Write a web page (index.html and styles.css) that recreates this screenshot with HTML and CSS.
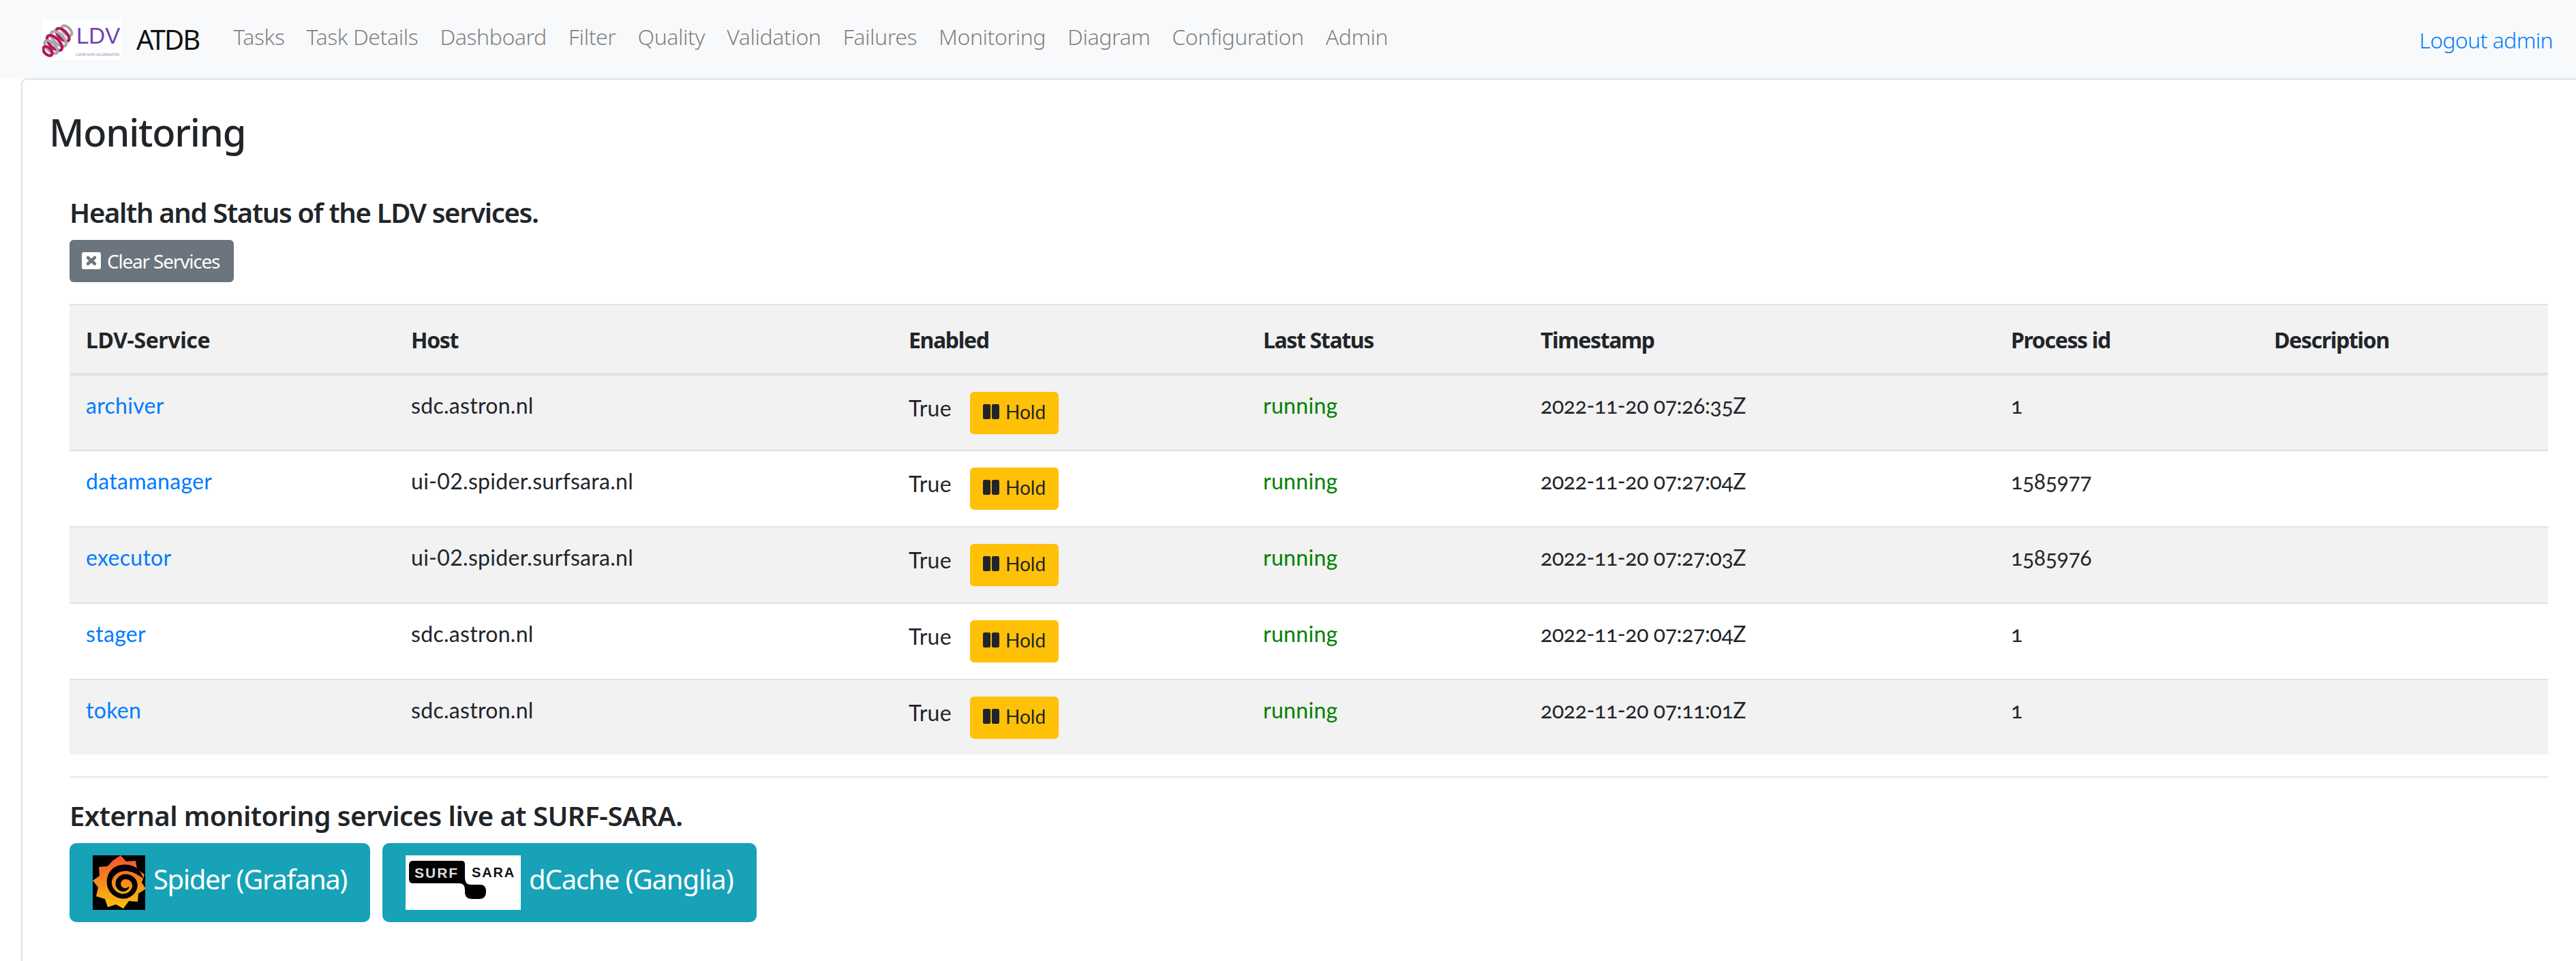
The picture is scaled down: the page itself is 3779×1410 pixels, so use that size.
FILE: index.html
```html
<!DOCTYPE html>
<html lang="en">
<head>
<meta charset="utf-8">
<title>ATDB Monitoring</title>
<link rel="stylesheet" href="styles.css">
</head>
<body>
<nav class="navbar">
  <a class="brand" href="#">
    <svg class="logo" viewBox="0 0 116 60" aria-hidden="true">
      <rect width="116" height="60" fill="#fff"/>
      <g fill="none" stroke-width="4.2">
        <ellipse cx="36" cy="17" rx="9" ry="5" transform="rotate(45 36 17)" stroke="#a8a8aa"/>
        <ellipse cx="30" cy="23" rx="12" ry="6" transform="rotate(45 30 23)" stroke="#b5195d"/>
        <ellipse cx="24" cy="29" rx="14" ry="7" transform="rotate(45 24 29)" stroke="#a8a8aa"/>
        <ellipse cx="18" cy="35" rx="14" ry="7" transform="rotate(45 18 35)" stroke="#b5195d"/>
        <ellipse cx="13" cy="41" rx="12" ry="6" transform="rotate(45 13 41)" stroke="#a8a8aa"/>
        <ellipse cx="8" cy="47" rx="8" ry="5" transform="rotate(45 8 47)" stroke="#b5195d"/>
      </g>
      <text x="50" y="36" class="logo-big">LDV</text>
      <text x="49" y="54" class="logo-small" textLength="64" lengthAdjust="spacingAndGlyphs">LOFAR DATA VALORISATION</text>
    </svg>
    <span>ATDB</span>
  </a>
  <ul class="nav-links">
    <li><a href="#">Tasks</a></li>
    <li><a href="#">Task Details</a></li>
    <li><a href="#">Dashboard</a></li>
    <li><a href="#">Filter</a></li>
    <li><a href="#">Quality</a></li>
    <li><a href="#">Validation</a></li>
    <li><a href="#">Failures</a></li>
    <li><a href="#">Monitoring</a></li>
    <li><a href="#">Diagram</a></li>
    <li><a href="#">Configuration</a></li>
    <li><a href="#">Admin</a></li>
  </ul>
  <a class="logout" href="#">Logout admin</a>
</nav>
<main class="panel">
  <h1 class="page-title">Monitoring</h1>
  <section class="content">
    <h2 class="section-title">Health and Status of the LDV services.</h2>
    <a class="btn-clear" href="#">
      <svg class="icon-close" viewBox="0 0 28 26" aria-hidden="true">
        <rect width="28" height="25" rx="3" fill="#fff"/>
        <path d="M9 8l10 9M19 8l-10 9" stroke="#6c757d" stroke-width="4.5" stroke-linecap="round"/>
      </svg>
      Clear Services
    </a>
    <table class="services">
      <colgroup>
        <col class="c1"><col class="c2"><col class="c3"><col class="c4"><col class="c5"><col class="c6"><col class="c7">
      </colgroup>
      <thead>
        <tr><th>LDV-Service</th><th>Host</th><th>Enabled</th><th>Last Status</th><th>Timestamp</th><th>Process id</th><th>Description</th></tr>
      </thead>
      <tbody>
        <tr><td><a href="#">archiver</a></td><td>sdc.astron.nl</td><td><div class="enabled"><span class="true">True</span><a class="btn-hold" href="#"><svg class="icon-pause" viewBox="0 0 26 24" aria-hidden="true"><rect width="12" height="24" rx="2.5"/><rect x="14" width="12" height="24" rx="2.5"/></svg>Hold</a></div></td><td class="status">running</td><td class="num">2022-11-20 07:26:35Z</td><td class="num">1</td><td></td></tr>
        <tr><td><a href="#">datamanager</a></td><td>ui-02.spider.surfsara.nl</td><td><div class="enabled"><span class="true">True</span><a class="btn-hold" href="#"><svg class="icon-pause" viewBox="0 0 26 24" aria-hidden="true"><rect width="12" height="24" rx="2.5"/><rect x="14" width="12" height="24" rx="2.5"/></svg>Hold</a></div></td><td class="status">running</td><td class="num">2022-11-20 07:27:04Z</td><td class="num">1585977</td><td></td></tr>
        <tr><td><a href="#">executor</a></td><td>ui-02.spider.surfsara.nl</td><td><div class="enabled"><span class="true">True</span><a class="btn-hold" href="#"><svg class="icon-pause" viewBox="0 0 26 24" aria-hidden="true"><rect width="12" height="24" rx="2.5"/><rect x="14" width="12" height="24" rx="2.5"/></svg>Hold</a></div></td><td class="status">running</td><td class="num">2022-11-20 07:27:03Z</td><td class="num">1585976</td><td></td></tr>
        <tr><td><a href="#">stager</a></td><td>sdc.astron.nl</td><td><div class="enabled"><span class="true">True</span><a class="btn-hold" href="#"><svg class="icon-pause" viewBox="0 0 26 24" aria-hidden="true"><rect width="12" height="24" rx="2.5"/><rect x="14" width="12" height="24" rx="2.5"/></svg>Hold</a></div></td><td class="status">running</td><td class="num">2022-11-20 07:27:04Z</td><td class="num">1</td><td></td></tr>
        <tr><td><a href="#">token</a></td><td>sdc.astron.nl</td><td><div class="enabled"><span class="true">True</span><a class="btn-hold" href="#"><svg class="icon-pause" viewBox="0 0 26 24" aria-hidden="true"><rect width="12" height="24" rx="2.5"/><rect x="14" width="12" height="24" rx="2.5"/></svg>Hold</a></div></td><td class="status">running</td><td class="num">2022-11-20 07:11:01Z</td><td class="num">1</td><td></td></tr>
      </tbody>
    </table>
    <hr class="divider">
    <h2 class="section-title external">External monitoring services live at SURF-SARA.</h2>
    <div class="ext-links">
      <a class="btn-ext btn-spider" href="#">
        <svg class="ext-img" width="77" height="80" viewBox="0 0 77 80" aria-hidden="true">
          <defs><linearGradient id="gf" x1="0" y1="0" x2="0" y2="1"><stop offset="0" stop-color="#f2512b"/><stop offset="1" stop-color="#fbc30e"/></linearGradient></defs>
          <rect width="77" height="80" fill="#000"/>
          <path d="M41 0l8 9 14-1 2 12 11 8-4 12 6 9-11 7-1 12-13-1-8 11-11-6-12 4-4-12-13-4 3-13-8-10 10-7-1-13 13-1 7-8z" fill="url(#gf)"/>
          <path d="M74 34C70 17 55 12 42 14C27 16 19 29 21 43C23 56 36 66 50 63C61 60 68 49 65 39C62 30 52 26 44 28C36 31 32 38 34 45C36 51 43 55 49 52C53 50 55 46 52 46C50 49 45 49 42 45C40 41 42 36 47 35C54 34 59 40 58 46C56 54 48 58 41 56C33 54 27 46 28 38C30 28 40 22 50 23C62 24 71 32 74 34Z" fill="#000"/>
        </svg>
        <span class="ext-label">Spider (Grafana)</span>
      </a>
      <a class="btn-ext btn-dcache" href="#">
        <svg class="ext-img" width="169" height="80" viewBox="0 0 169 80" aria-hidden="true">
          <rect width="169" height="80" fill="#fff"/>
          <path d="M11 8H82Q87 8 87 13V33Q87 43 96 43H110Q118 43 118 53Q118 64 108 64H98Q87 64 87 54V50Q87 41 78 41H11Q5 41 5 35V14Q5 8 11 8Z" fill="#000"/>
          <text x="13" y="33" class="surf-text" textLength="62">SURF</text>
          <text x="97" y="32" class="sara-text" textLength="61">SARA</text>
        </svg>
        <span class="ext-label">dCache (Ganglia)</span>
      </a>
    </div>
  </section>
</main>
</body>
</html>
```

FILE: styles.css
```css
* { box-sizing: border-box; }
html, body { margin: 0; padding: 0; }
body {
  width: 3779px;
  height: 1410px;
  overflow: hidden;
  background: #fff;
  color: #212529;
  font-family: "Noto Sans", "Open Sans", sans-serif;
  font-size: 32px;
  line-height: 1.5;
}
a { text-decoration: none; color: #007bff; }

.navbar {
  display: flex;
  align-items: center;
  height: 115px;
  padding: 0 34px 0 62px;
  background: #f8f9fa;
}
.brand {
  display: flex;
  align-items: center;
  gap: 22px;
  color: #111;
  font-size: 40px;
  letter-spacing: -2px;
  margin-right: 50px;
}
.logo { width: 116px; height: 60px; display: block; }
.logo-big { font-family: "Liberation Sans", sans-serif; font-size: 33px; fill: #6f3fb0; letter-spacing: 0; }
.logo-small { font-family: "Liberation Sans", sans-serif; font-size: 5px; fill: #8a88a8; letter-spacing: 0; }
.nav-links {
  display: flex;
  gap: 32px;
  list-style: none;
  margin: 0;
  padding: 0 0 8px;
  flex: 1;
}
.nav-links a { color: rgba(0,0,0,.5); letter-spacing: -.43px; font-weight: 300; }
.logout { letter-spacing: -.6px; font-weight: 300; padding-top: 2px; }

.panel {
  margin-left: 31px;
  height: 1295px;
  border-left: 2px solid #dee2e6;
  border-top: 2px solid #dee2e6;
  border-top-left-radius: 8px;
  padding: 0 0 0 39px;
}
.page-title {
  margin: 43px 0 0;
  font-size: 56px;
  font-weight: 500;
  line-height: 67px;
  letter-spacing: -1.2px;
}
.content { padding: 0 41px 0 30px; }
.section-title {
  margin: 61px 0 0;
  font-size: 40px;
  font-weight: 600;
  line-height: 48px;
  letter-spacing: -1.33px;
}
.btn-clear {
  display: inline-flex;
  align-items: center;
  gap: 9px;
  height: 62px;
  width: 241px;
  margin-top: 16px;
  padding-left: 18px;
  background: #6c757d;
  color: #fff;
  border-radius: 6px;
  font-size: 28px;
  letter-spacing: -1.2px;
  white-space: nowrap;
}
.icon-close { width: 28px; height: 26px; display: block; }

.services {
  margin-top: 32px;
  width: 100%;
  border-collapse: collapse;
  table-layout: fixed;
  font-family: "Lato", sans-serif;
}
.c1 { width: 477px; }
.c2 { width: 730px; }
.c3 { width: 520px; }
.c4 { width: 407px; }
.c5 { width: 690px; }
.c6 { width: 386px; }
.services th {
  height: 102px;
  padding: 2px 24px 0;
  text-align: left;
  font-family: "Noto Sans", sans-serif;
  font-weight: 700;
  font-size: 32px;
  letter-spacing: -1.35px;
  background: #f2f2f2;
  border-top: 2px solid #dee2e6;
  border-bottom: 4px solid #dee2e6;
}
.services th:first-child { letter-spacing: -.4px; }
.services td {
  height: 112px;
  padding: 24px 24px 0;
  vertical-align: top;
  border-bottom: 2px solid #dee2e6;
  font-size: 32px;
  line-height: 40px;
  letter-spacing: .3px;
}
.services td.num {
  letter-spacing: -.4px;
  font-variant-numeric: oldstyle-nums;
}
.services tbody tr:nth-child(odd) td { background: #f2f2f2; }
.services tbody tr:last-child td { border-bottom: 0; height: 110px; }
.services td a { color: #007bff; }
.status { color: #008000; }
.enabled { display: flex; align-items: flex-start; }
.true { width: 90px; margin-top: 4px; }
.btn-hold {
  display: inline-flex;
  align-items: center;
  gap: 9px;
  width: 130px;
  height: 62px;
  padding: 0 0 4px 19px;
  background: #ffc107;
  border-radius: 6px;
  font-size: 28px;
  letter-spacing: 0;
}
.services td a.btn-hold { color: #212529; }
.icon-pause { width: 24px; height: 24px; fill: #212529; display: block; }

.divider {
  margin: 32px 0 0;
  border: 0;
  border-top: 2px solid #e6e6e6;
}
.section-title.external { margin-top: 32px; letter-spacing: -.5px; }
.ext-links { display: flex; gap: 18px; margin-top: 16px; }
.btn-ext {
  display: inline-flex;
  align-items: center;
  gap: 12px;
  height: 116px;
  padding: 0 34px;
  background: #17a2b8;
  color: #fff;
  border-radius: 10px;
  font-size: 40px;
  white-space: nowrap;
}
.ext-label { margin-bottom: 10px; }
.btn-spider { letter-spacing: -1.35px; }
.btn-dcache { letter-spacing: -1.1px; }
.ext-img { display: block; }
.surf-text { font-family: "Liberation Sans", sans-serif; font-weight: 700; font-size: 21px; fill: #ddd; }
.sara-text { font-family: "Liberation Sans", sans-serif; font-weight: 700; font-size: 20px; fill: #111; }
```
